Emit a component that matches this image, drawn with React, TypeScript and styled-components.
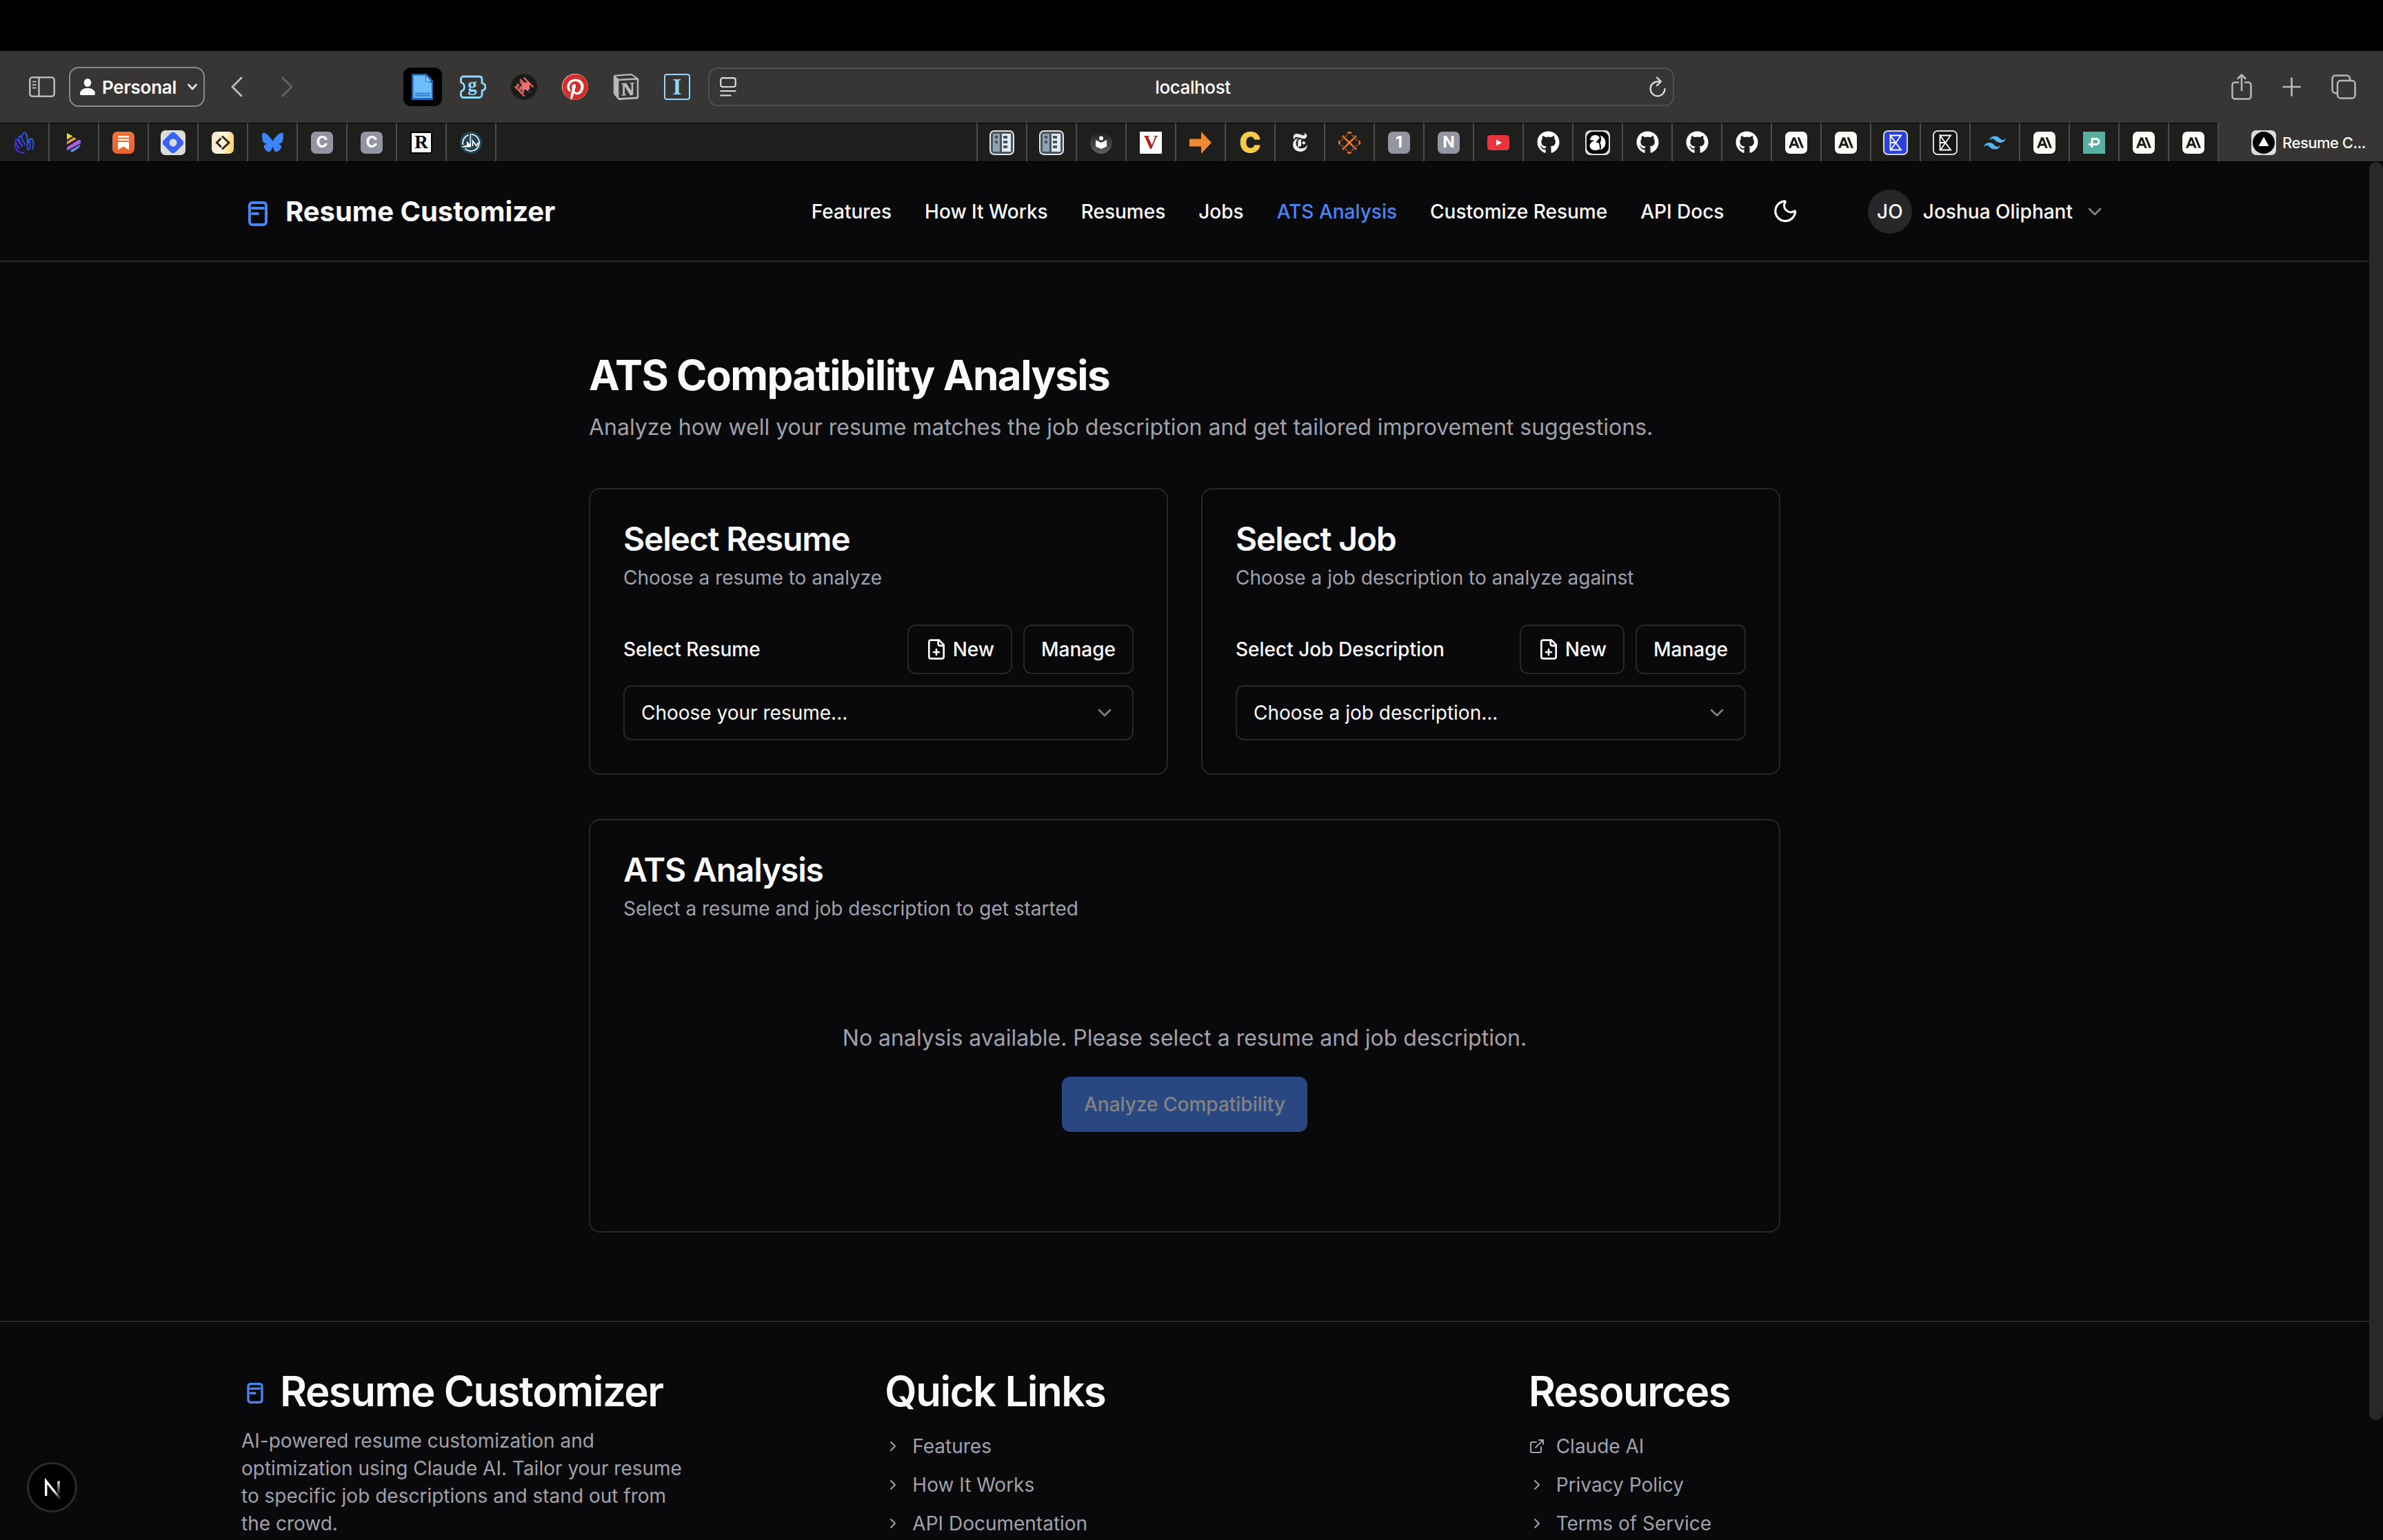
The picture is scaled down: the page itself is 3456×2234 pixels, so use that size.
import React from "react";
import styled, { createGlobalStyle } from "styled-components";
import { ChevronDown, ChevronRight, ExternalLink, Moon } from "lucide-react";
import { FaGithub, FaPinterest } from "react-icons/fa";
import { FaBluesky } from "react-icons/fa6";
import { SiAnthropic, SiNewyorktimes, SiNotion, SiTailwindcss } from "react-icons/si";

const c = {
  bg: "#09090b",
  border: "#27272a",
  fg: "#fafafa",
  muted: "#a1a1aa",
  primary: "#4a85f5",
  chrome: "#383634",
  strip: "#1e1e1c",
  chromeIcon: "#b9b8b7",
};

const GlobalStyle = createGlobalStyle`
  * { box-sizing: border-box; }
  html, body { margin: 0; background: ${c.bg}; overflow: hidden; }
  body {
    font-family: Inter, "Liberation Sans", sans-serif;
    font-optical-sizing: none;
    -webkit-font-smoothing: antialiased;
    color: ${c.fg};
  }
  h1, h2, h3, p, ul { margin: 0; padding: 0; font-weight: inherit; }
  svg { display: block; flex: none; }
`;

/* ---------- browser window ---------- */

const Screen = styled.div`
  width: 3456px;
  height: 2234px;
  display: flex;
  flex-direction: column;
  overflow: hidden;
  background: ${c.bg};
`;

const Notch = styled.div`
  height: 74px;
  flex: none;
  background: #000;
`;

const Toolbar = styled.div`
  height: 104px;
  flex: none;
  display: flex;
  align-items: center;
  padding: 0 39px 0 42px;
  background: ${c.chrome};
  color: ${c.chromeIcon};
`;

const ProfileButton = styled.div`
  width: 197px;
  height: 58px;
  margin: 0 38px 0 20px;
  padding: 0 9px 0 14px;
  display: flex;
  align-items: center;
  border: 2px solid #8b8a88;
  border-radius: 14px;
  color: #fff;
  font-size: 26px;
  font-weight: 600;
  letter-spacing: -0.25px;
  span { margin: 0 auto 0 10px; }
`;

const History = styled.div`
  display: flex;
  gap: 56px;
  margin-right: 160px;
`;

const Extensions = styled.div`
  display: flex;
  align-items: center;
  gap: 36px;
  margin: 0 26px;
`;

const ActiveExtension = styled.div`
  width: 56px;
  height: 56px;
  display: grid;
  place-items: center;
  border-radius: 11px;
  background: #000;
`;

const AddressBar = styled.div`
  width: 1401px;
  height: 56px;
  padding: 0 10px 0 15px;
  display: flex;
  align-items: center;
  justify-content: space-between;
  border: 2px solid #51504e;
  border-radius: 14px;
  color: #dddcdb;
  span {
    color: #fff;
    font-size: 26px;
    font-weight: 500;
    letter-spacing: -0.4px;
  }
`;

const WindowActions = styled.div`
  margin-left: auto;
  display: flex;
  align-items: center;
  gap: 44px;
`;

const TabStrip = styled.div`
  height: 57px;
  flex: none;
  display: flex;
  background: ${c.strip};
  border-bottom: 1px solid #000;
`;

const Tab = styled.div<{ $side: "left" | "right" }>`
  width: 72px;
  display: grid;
  place-items: center;
  border-top: 1px solid #000;
  border-${(p) => p.$side}: 2px solid #4b4b49;
`;

const StripGap = styled.div`
  flex: 1;
  border-top: 1px solid #000;
`;

const ActiveTab = styled.div`
  width: 240px;
  padding: 1px 0 0 47px;
  display: flex;
  align-items: center;
  gap: 9px;
  background: ${c.chrome};
  border-left: 2px solid #4b4b49;
  font-size: 22px;
  font-weight: 500;
  letter-spacing: -0.5px;
`;

const Tile = styled.div<{ $bg: string; $size?: number; $radius?: number; $border?: string; $color?: string }>`
  width: ${(p) => p.$size ?? 32}px;
  height: ${(p) => p.$size ?? 32}px;
  display: grid;
  place-items: center;
  overflow: hidden;
  border-radius: ${(p) => p.$radius ?? 7}px;
  border: ${(p) => (p.$border ? `2px solid ${p.$border}` : "none")};
  background: ${(p) => p.$bg};
  color: ${(p) => p.$color ?? "#fff"};
`;

const Glyph = styled.span<{ $size?: number; $weight?: number; $serif?: boolean; $color?: string }>`
  font-family: ${(p) => (p.$serif ? '"Liberation Serif", serif' : "Inter, sans-serif")};
  font-size: ${(p) => p.$size ?? 23}px;
  font-weight: ${(p) => p.$weight ?? 700};
  line-height: 1;
  color: ${(p) => p.$color ?? "#fff"};
`;

/* ---------- page ---------- */

const Viewport = styled.div`
  flex: 1;
  min-height: 0;
  display: flex;
`;

const Page = styled.div`
  width: 3436px;
  overflow: hidden;
`;

const ScrollThumb = styled.div`
  width: 20px;
  height: 1825px;
  border-radius: 10px;
  background: #28282a;
`;

const Header = styled.header`
  height: 145px;
  padding: 0 382px 0 350px;
  display: flex;
  align-items: center;
  border-bottom: 2px solid ${c.border};
  font-size: 28px;
  font-weight: 500;
  line-height: 40px;
`;

const Brand = styled.div`
  display: flex;
  align-items: center;
  gap: 16px;
  margin-right: auto;
  font-size: 40px;
  font-weight: 700;
  letter-spacing: -0.04px;
  svg { margin-top: 7px; }
`;

const Nav = styled.nav`
  display: flex;
  gap: 48px;
  margin-right: 70px;
`;

const NavLink = styled.a<{ $active?: boolean }>`
  color: ${(p) => (p.$active ? c.primary : c.fg)};
`;

const User = styled.div`
  display: flex;
  align-items: center;
  gap: 16px;
  margin-left: 100px;
  > svg { opacity: 0.5; }
`;

const Avatar = styled.div`
  width: 64px;
  height: 64px;
  display: grid;
  place-items: center;
  border-radius: 50%;
  background: ${c.border};
`;

const Main = styled.main`
  width: 1728px;
  margin: 0 auto;
  padding: 128px 0;
`;

const PageTitle = styled.h1`
  font-size: 60px;
  line-height: 72px;
  font-weight: 700;
  letter-spacing: -0.025em;
`;

const Lead = styled.p`
  margin: 16px 0 64px;
  font-size: 32px;
  line-height: 48px;
  color: ${c.muted};
`;

const CardGrid = styled.div`
  display: grid;
  grid-template-columns: 1fr 1fr;
  gap: 48px;
  margin-bottom: 64px;
`;

const Card = styled.section`
  padding: 48px;
  border: 2px solid ${c.border};
  border-radius: 16px;
`;

const CardTitle = styled.h3`
  font-size: 48px;
  line-height: 48px;
  font-weight: 600;
  letter-spacing: -0.025em;
`;

const CardText = styled.p`
  margin: 12px 0 48px;
  font-size: 28px;
  line-height: 40px;
  color: ${c.muted};
`;

const FieldRow = styled.div`
  display: flex;
  align-items: center;
  gap: 16px;
  margin-bottom: 16px;
  font-size: 28px;
  font-weight: 500;
`;

const FieldLabel = styled.label`
  margin-right: auto;
`;

const OutlineButton = styled.div`
  height: 72px;
  padding: 0 24px;
  display: flex;
  align-items: center;
  gap: 8px;
  border: 2px solid ${c.border};
  border-radius: 12px;
`;

const Select = styled.div`
  height: 80px;
  padding: 0 24px;
  display: flex;
  align-items: center;
  justify-content: space-between;
  border: 2px solid ${c.border};
  border-radius: 12px;
  font-size: 28px;
  svg { opacity: 0.5; }
`;

const Empty = styled.div`
  padding: 96px 0;
  display: flex;
  flex-direction: column;
  align-items: center;
  gap: 32px;
  font-size: 32px;
  line-height: 48px;
  color: ${c.muted};
`;

const PrimaryButton = styled.div`
  height: 80px;
  padding: 0 32px;
  display: flex;
  align-items: center;
  border-radius: 12px;
  background: ${c.primary};
  color: ${c.fg};
  font-size: 28px;
  font-weight: 500;
  opacity: 0.5;
`;

const Footer = styled.footer`
  padding: 64px 350px;
  display: grid;
  grid-template-columns: repeat(3, 1fr);
  gap: 64px;
  border-top: 2px solid ${c.border};
`;

const FooterTitle = styled.h2`
  display: flex;
  align-items: center;
  gap: 16px;
  font-size: 60px;
  line-height: 72px;
  font-weight: 600;
  letter-spacing: -0.025em;
  svg { margin-top: 6px; }
`;

const FooterText = styled.p`
  max-width: 650px;
  margin-top: 16px;
  font-size: 28px;
  line-height: 40px;
  color: ${c.muted};
`;

const FooterList = styled.ul`
  margin-top: 24px;
  display: flex;
  flex-direction: column;
  gap: 16px;
  list-style: none;
  font-size: 28px;
  line-height: 40px;
  color: ${c.muted};
`;

const FooterItem = styled.li`
  display: flex;
  align-items: center;
  gap: 16px;
`;

const DevBadge = styled.div`
  position: absolute;
  left: 39px;
  top: 2121px;
  width: 73px;
  height: 73px;
  display: grid;
  place-items: center;
  border-radius: 50%;
  border: 3px solid #2a2a2b;
  background: #000;
`;

/* ---------- drawings ---------- */

const DocIcon = ({ size }: { size: number }) => (
  <svg width={size} height={size} viewBox="0 0 24 24" fill="none" stroke={c.primary} strokeWidth="2" strokeLinecap="round">
    <rect x="6" y="4" width="12" height="16" rx="2" />
    <path d="M8 8h8M8 12h4" />
  </svg>
);

const FilePlusIcon = () => (
  <svg width="32" height="32" viewBox="0 0 24 24" fill="none" stroke="currentColor" strokeWidth="2" strokeLinecap="round" strokeLinejoin="round">
    <path d="M15 2H6a2 2 0 0 0-2 2v16a2 2 0 0 0 2 2h12a2 2 0 0 0 2-2V7Z" />
    <path d="M14 2v4a2 2 0 0 0 2 2h4M9 15h6M12 12v6" />
  </svg>
);

const SidebarIcon = () => (
  <svg width="38" height="30" viewBox="0 0 38 30" fill="none" stroke="currentColor" strokeWidth="2.6">
    <rect x="1.3" y="1.3" width="35.4" height="27.4" rx="4" />
    <path d="M14.5 1.5v27" />
    <path d="M5.5 7.5h4.500M5.500 12h4.500M5.500 16.500h4.500" strokeWidth="1.8" strokeLinecap="round" />
  </svg>
);

const PersonIcon = () => (
  <svg width="22" height="24" viewBox="0 0 22 24" fill="currentColor">
    <ellipse cx="11" cy="6" rx="5.300" ry="6" />
    <path d="M0 22c0-5 5-8.200 11-8.200S22 17 22 22c0 1.200-.8 2-2 2H2c-1.200 0-2-.8-2-2z" />
  </svg>
);

const SmallChevron = () => (
  <svg width="14" height="10" viewBox="0 0 14 10" fill="none" stroke="#e6e5e4" strokeWidth="2.6" strokeLinecap="round" strokeLinejoin="round">
    <path d="M1.500 2l5.500 6 5.500-6" />
  </svg>
);

const Arrow = ({ flip }: { flip?: boolean }) => (
  <svg width="17" height="30" viewBox="0 0 17 30" fill="none" stroke={flip ? "#646361" : c.chromeIcon} strokeWidth="3" strokeLinecap="round" strokeLinejoin="round">
    <path d={flip ? "M2 2l13 13L2 28" : "M15 2L2 15l13 13"} />
  </svg>
);

const PageFileIcon = () => (
  <svg width="32" height="38" viewBox="0 0 32 38">
    <path d="M0 0h22l9 10v28H0z" fill="#1467b8" />
    <path d="M2.500 2.500h17.500v8.500l9 2v22H2.500z" fill="#6fbcfb" />
    <path d="M21 3l7 8h-7z" fill="#8accff" />
    <path d="M5 27.500h22v5.500H5z" fill="#2f86d6" />
    <path d="M5 30.200h22" stroke="#6fbcfb" strokeWidth="1" />
  </svg>
);

const PuzzleIcon = () => (
  <svg width="38" height="38" viewBox="0 0 38 38" fill="none" stroke="#8fd8ff" strokeWidth="2.800" strokeLinejoin="round">
    <path d="M5 4h23c2.500 0 4 1.500 4 3.500v6c3.500 1 5 3 5 5.500s-1.500 4.500-5 5.500V30c0 2.500-1.500 4.500-4 4.500H5c-2 0-3.500-1.500-3.500-3.500v-5.500c3-.8 5-3.200 5-6.500s-2-5.500-5-6.500V7.500C1.500 5.500 3 4 5 4z" />
    <text x="18" y="24.500" textAnchor="middle" fontFamily="Liberation Serif, serif" fontWeight="700" fontSize="27" fill="#8fd8ff" stroke="none">g</text>
  </svg>
);

const DiamondBadge = () => (
  <svg width="38" height="38" viewBox="0 0 38 38">
    <circle cx="19" cy="19" r="19" fill="#1b1b1b" />
    <path d="M15.500 12.500h9.500l2 2V23H15.500z" fill="#f0706c" />
    <g stroke="#f0706c" strokeWidth="2">
      <path d="M18.500 5.500L32.500 19.500M13.500 8l4.500 4.500M5.800 18.500l13.700 14" />
      <path d="M9 14.500l10 10.500M8 17l11 11.500M22 22l5 4.500M13 11l3 3" strokeDasharray="4 1.600" />
    </g>
  </svg>
);

const ReaderIcon = () => (
  <svg width="24" height="28" viewBox="0 0 24 28" fill="none" stroke="currentColor" strokeWidth="2.200" strokeLinecap="round">
    <rect x="1.200" y="1.200" width="21.500" height="12.800" rx="3" />
    <path d="M1.200 20h21.500M1.200 26.500h14.500" />
  </svg>
);

const ReloadIcon = () => (
  <svg width="24" height="30" viewBox="0 0 24 30" fill="none" stroke="currentColor" strokeWidth="2.300" strokeLinecap="round" strokeLinejoin="round">
    <path d="M15.500 7.300H12A10.500 10.500 0 1 0 22.500 17.800" />
    <path d="M11 1.500l5.800 5.800-5.800 5.800" />
  </svg>
);

const ShareIcon = () => (
  <svg width="30" height="38" viewBox="0 0 30 38" fill="none" stroke="currentColor" strokeWidth="2.500" strokeLinecap="round" strokeLinejoin="round">
    <path d="M10 12.500H5a3.500 3.500 0 0 0-3.500 3.500v17A3.500 3.500 0 0 0 5 36.500h20a3.500 3.500 0 0 0 3.500-3.500V16a3.500 3.500 0 0 0-3.500-3.500h-5" />
    <path d="M15 24V1.800M9.500 7L15 1.500 20.500 7" />
  </svg>
);

const PlusIcon = () => (
  <svg width="27" height="28" viewBox="0 0 27 28" stroke="currentColor" strokeWidth="2.700" strokeLinecap="round">
    <path d="M13.500 1.500v25M1.500 14h24" />
  </svg>
);

const WindowsIcon = () => (
  <svg width="36" height="36" viewBox="0 0 36 36" fill="none" stroke="currentColor" strokeWidth="2.500">
    <rect x="9" y="9" width="25.500" height="25.500" rx="4.500" />
    <path d="M8.500 27H6a4.500 4.500 0 0 1-4.500-4.500V6A4.500 4.500 0 0 1 6 1.500h16.500A4.500 4.500 0 0 1 27 6v2.500" />
  </svg>
);

const HandIcon = () => (
  <svg width="32" height="32" viewBox="0 0 32 32" fill="none" strokeWidth="1.900" strokeLinecap="round">
    <defs>
      <linearGradient id="hand" x1="0" y1="1" x2="1" y2="0">
        <stop offset="0" stopColor="#4a1ff5" />
        <stop offset="1" stopColor="#1b73e8" />
      </linearGradient>
    </defs>
    <path
      stroke="url(#hand)"
      d="M16 30.500C9 32 3 26 2.500 19c.8-2 3-1 4 2l2 3.500M8.500 24C4 18 2.500 13 4.500 11.500c2-1 4 3 8.500 10M13 20.500C8 12 6.500 8 9 6.500c2.500-1 4.500 5 8.500 12.500M12.500 8C13 3.500 15 1 17.500 1.500c3 1.500 3 9 3.500 17M21 18.500c.5-5 2.500-8 5-8 5 .5 3.500 10 2 15M23 13c-3 5-3.500 12.500-1 13 3-.5 3-7 2.500-12"
    />
  </svg>
);

const StripesIcon = () => (
  <svg width="32" height="32" viewBox="0 0 32 32">
    <path d="M6 2l8.500 4.500L6 11.500z" fill="#f2d54e" />
    <path d="M6 14.500L16 8l4 2.500L6 18.500z" fill="#e8964f" />
    <path d="M6 22.500L23.500 11.500l3 1.800-1 4L6 27.500z" fill="#a95fdc" />
    <path d="M11 27l15-8.500-2 4.500-11 7.500z" fill="#5b8def" />
  </svg>
);

const BookmarkTile = () => (
  <Tile $bg="linear-gradient(#f0743a, #e8622f)">
    <svg width="32" height="32" viewBox="0 0 32 32" fill="#fff">
      <path d="M8 6h16v2.500H8zM8 10.500h16V13H8zM8 15h16v11.500l-8-5-8 5z" />
    </svg>
  </Tile>
);

const RhombusTile = () => (
  <Tile $bg="#dcdcdc" $size={36}>
    <svg width="36" height="36" viewBox="0 0 36 36">
      <rect x="5.800" y="5.800" width="24.400" height="24.400" rx="5" transform="rotate(45 18 18)" fill="#3963f6" />
      <circle cx="18" cy="18" r="5.500" fill="#dcdcdc" />
    </svg>
  </Tile>
);

const CodeTile = () => (
  <Tile $bg="linear-gradient(100deg, #f9e6cf 10%, #fdf6e4 50%, #f5cf57)">
    <svg width="32" height="32" viewBox="0 0 32 32" fill="none" stroke="#3a2410" strokeWidth="3">
      <path d="M15 6.500l10 9.500-10 9.500" />
      <path d="M13.500 9.500L7.500 16l6.500 6.500" />
    </svg>
  </Tile>
);

const CompassIcon = () => (
  <svg width="32" height="32" viewBox="0 0 32 32" fill="none" stroke="#fff" strokeWidth="1.700">
    <circle cx="16" cy="16" r="16" fill="#23485c" stroke="none" />
    <path d="M16.500 4A12 12 0 1 1 7.500 24.500M4.500 19A12 12 0 0 1 12.500 4.800" />
    <path d="M15.500 3v19H3l7.500-2v-5.500l4.500 5V6z" fill="#fff" strokeWidth="1" />
    <path d="M18.500 21v-7.500l5.500 7 2.500-4.500" />
  </svg>
);

const NewsTile = () => (
  <Tile $bg="#47545f" $size={36} $border="#e0e2e3">
    <svg width="32" height="32" viewBox="0 0 32 32">
      <rect x="3" y="3" width="10" height="26" fill="#8fa1b0" />
      <rect x="16" y="3" width="13" height="26" fill="#e4e9ed" />
      <path d="M6 6h4v4H6zM6 13h4v4H6zM18 6h6v4h-6zM18 13h6v4h-6zM18 20h6v4h-6z" fill="#47545f" />
    </svg>
  </Tile>
);

const LibraryTile = () => (
  <Tile $bg="linear-gradient(#1c1c1c, #606060)" $radius={16}>
    <svg width="32" height="32" viewBox="0 0 32 32" fill="#fff">
      <circle cx="16" cy="9.500" r="3" />
      <path d="M8 12l8 4 8-4v9.500L16 25l-8-3.500z" />
    </svg>
  </Tile>
);

const OrangeArrow = () => (
  <svg width="32" height="32" viewBox="0 0 32 32" fill="#f08a30">
    <path d="M0 10.500h17V0l15 16-15 16V21.500H0z" />
  </svg>
);

const LatticeIcon = () => (
  <svg width="32" height="32" viewBox="0 0 32 32" fill="none" stroke="#ec7428" strokeWidth="1.500">
    <path d="M5 7.500h3l8 7.500 8-7.500h3M5 24.500h3l8-7.500 8 7.500h3M7.500 5v3l7.500 8-7.500 8v3M24.500 5v3L17 16l7.500 8v3" />
    <path d="M13.500 2.500L16 0l2.500 2.500M13.500 29.500L16 32l2.500-2.500M2.500 13.500L0 16l2.500 2.500M29.500 13.500L32 16l-2.500 2.500" strokeWidth="2.500" />
    <path d="M10.500 7l2.500-3M21.500 7L19 4M10.500 25l2.500 3M21.500 25L19 28M7 10.500L4 13M25 10.500l3 2.500M7 21.500L4 19M25 21.500l3-2.500" strokeDasharray="2 1" />
  </svg>
);

const YoutubeIcon = () => (
  <svg width="32" height="22" viewBox="0 0 32 22">
    <rect width="32" height="22" rx="4.500" fill="#ea333d" />
    <path d="M13 6.500l8 4.500-8 4.500z" fill="#fff" />
  </svg>
);

const ScholarTile = () => (
  <Tile $bg="#dcdcdc" $size={36}>
    <svg width="36" height="36" viewBox="0 0 36 36">
      <rect x="2" y="2" width="32" height="32" rx="9" fill="#000" />
      <g fill="#fff">
        <path d="M7 14C7.500 9.500 10.500 7 14.500 7c3 0 5.500 1.500 6.500 4l-6 7c4-1 6 1 5.500 4l1 5c-2 1.500-4.500 2-7 2-5 0-8-3-8-6.500s3-6 7.500-7.500z" />
        <path d="M22 7.500c4.500 1.500 7.500 6 7.500 10.500s-3 9-7.500 10.500c1.500-3.500 1.500-7-.5-10 2-3.500 2-7.500.5-11z" />
      </g>
    </svg>
  </Tile>
);

const HourglassTile = ({ bg }: { bg: string }) => (
  <Tile $bg={bg} $size={36} $border="#d8d9dc">
    <svg width="32" height="32" viewBox="0 0 32 32" fill="none" stroke="#fff" strokeWidth="1.800">
      <path d="M8.500 5.500h15.500L9 26.500h15L8.500 5.500v21h3M8.500 16h7" />
    </svg>
  </Tile>
);

const AnthropicTile = () => (
  <Tile $bg="#fbfaf7" $color="#1c1b19">
    <SiAnthropic size={22} />
  </Tile>
);

const LetterTile = ({ children }: { children: string }) => (
  <Tile $bg="#9495a2">
    <Glyph>{children}</Glyph>
  </Tile>
);

const SerifTile = () => (
  <Tile $bg="#f7fafc" $radius={0} $border="#000">
    <Glyph $serif $size={27} $color="#000">R</Glyph>
  </Tile>
);

const ParkingTile = () => (
  <Tile $bg="#57b0a0" $radius={0}>
    <svg width="32" height="32" viewBox="0 0 32 32" fill="none" stroke="#fff" strokeWidth="2.800">
      <path d="M13 23V10.500h6a4 4 0 0 1 0 8H8" />
    </svg>
  </Tile>
);

const TriangleTile = () => (
  <Tile $bg="#dcdcdc" $size={36}>
    <svg width="36" height="36" viewBox="0 0 36 36">
      <circle cx="18" cy="18" r="16" fill="#000" />
      <path d="M18 9.500l7.500 13.500h-15z" fill="#fff" />
    </svg>
  </Tile>
);

const pinned: React.ReactNode[] = [
  <HandIcon />,
  <StripesIcon />,
  <BookmarkTile />,
  <RhombusTile />,
  <CodeTile />,
  <FaBluesky size={31} color="#3c85f7" />,
  <LetterTile>C</LetterTile>,
  <LetterTile>C</LetterTile>,
  <SerifTile />,
  <CompassIcon />,
];

const open: React.ReactNode[] = [
  <NewsTile />,
  <NewsTile />,
  <LibraryTile />,
  <Tile $bg="#fff" $radius={0}><Glyph $serif $size={29} $color="#b82020">V</Glyph></Tile>,
  <OrangeArrow />,
  <Glyph $size={42} $weight={900} $color="#f5cb4b">C</Glyph>,
  <SiNewyorktimes size={27} color="#eee" />,
  <LatticeIcon />,
  <LetterTile>1</LetterTile>,
  <LetterTile>N</LetterTile>,
  <YoutubeIcon />,
  <FaGithub size={33} color="#fff" />,
  <ScholarTile />,
  <FaGithub size={33} color="#fff" />,
  <FaGithub size={33} color="#fff" />,
  <FaGithub size={33} color="#fff" />,
  <AnthropicTile />,
  <AnthropicTile />,
  <HourglassTile bg="#2a41e0" />,
  <HourglassTile bg="#141414" />,
  <SiTailwindcss size={32} color="#57b5f5" />,
  <AnthropicTile />,
  <ParkingTile />,
  <AnthropicTile />,
  <AnthropicTile />,
];

const navLinks = ["Features", "How It Works", "Resumes", "Jobs", "ATS Analysis", "Customize Resume", "API Docs"];

const BrowserChrome = () => (
  <>
    <Notch />
    <Toolbar>
      <SidebarIcon />
      <ProfileButton>
        <PersonIcon />
        <span>Personal</span>
        <SmallChevron />
      </ProfileButton>
      <History>
        <Arrow />
        <Arrow flip />
      </History>
      <ActiveExtension>
        <PageFileIcon />
      </ActiveExtension>
      <Extensions>
        <PuzzleIcon />
        <DiamondBadge />
        <Tile $bg="#fff" $size={38} $radius={19} $color="#d32f2c">
          <FaPinterest size={39} />
        </Tile>
        <SiNotion size={38} />
        <Tile $bg="transparent" $size={38} $radius={4} $border="#8fd8ff">
          <Glyph $serif $size={33} $weight={700} $color="#8fd8ff">I</Glyph>
        </Tile>
      </Extensions>
      <AddressBar>
        <ReaderIcon />
        <span>localhost</span>
        <ReloadIcon />
      </AddressBar>
      <WindowActions>
        <ShareIcon />
        <PlusIcon />
        <WindowsIcon />
      </WindowActions>
    </Toolbar>
    <TabStrip>
      {pinned.map((icon, i) => (
        <Tab key={i} $side="right">{icon}</Tab>
      ))}
      <StripGap />
      {open.map((icon, i) => (
        <Tab key={i} $side="left">{icon}</Tab>
      ))}
      <ActiveTab>
        <TriangleTile />
        <span>Resume C...</span>
      </ActiveTab>
    </TabStrip>
  </>
);

const Picker = ({ title, text, label, placeholder }: { title: string; text: string; label: string; placeholder: string }) => (
  <Card>
    <CardTitle>{title}</CardTitle>
    <CardText>{text}</CardText>
    <FieldRow>
      <FieldLabel>{label}</FieldLabel>
      <OutlineButton>
        <FilePlusIcon />
        New
      </OutlineButton>
      <OutlineButton>Manage</OutlineButton>
    </FieldRow>
    <Select>
      {placeholder}
      <ChevronDown size={32} />
    </Select>
  </Card>
);

const NextBadge = () => (
  <DevBadge>
    <svg width="66" height="66" viewBox="0 0 66 66" fill="none" strokeWidth="3.400">
      <defs>
        <linearGradient id="diag" gradientUnits="userSpaceOnUse" x1="36" y1="36" x2="46" y2="50">
          <stop offset="0" stopColor="#fff" />
          <stop offset="1" stopColor="#fff" stopOpacity="0" />
        </linearGradient>
        <linearGradient id="stem" gradientUnits="userSpaceOnUse" x1="42" y1="22" x2="42" y2="44">
          <stop offset="0" stopColor="#fff" />
          <stop offset="1" stopColor="#fff" stopOpacity="0" />
        </linearGradient>
      </defs>
      <path d="M45 50L23.700 23.500V45" stroke="url(#diag)" />
      <path d="M42 23.500V44" stroke="url(#stem)" />
    </svg>
  </DevBadge>
);

export default function App() {
  return (
    <Screen>
      <GlobalStyle />
      <BrowserChrome />
      <Viewport>
        <Page>
          <Header>
            <Brand>
              <DocIcon size={48} />
              Resume Customizer
            </Brand>
            <Nav>
              {navLinks.map((l) => (
                <NavLink key={l} $active={l === "ATS Analysis"}>{l}</NavLink>
              ))}
            </Nav>
            <Moon size={38.4} />
            <User>
              <Avatar>JO</Avatar>
              Joshua Oliphant
              <ChevronDown size={32} />
            </User>
          </Header>
          <Main>
            <PageTitle>ATS Compatibility Analysis</PageTitle>
            <Lead>Analyze how well your resume matches the job description and get tailored improvement suggestions.</Lead>
            <CardGrid>
              <Picker title="Select Resume" text="Choose a resume to analyze" label="Select Resume" placeholder="Choose your resume..." />
              <Picker title="Select Job" text="Choose a job description to analyze against" label="Select Job Description" placeholder="Choose a job description..." />
            </CardGrid>
            <Card>
              <CardTitle>ATS Analysis</CardTitle>
              <CardText>Select a resume and job description to get started</CardText>
              <Empty>
                <p>No analysis available. Please select a resume and job description.</p>
                <PrimaryButton>Analyze Compatibility</PrimaryButton>
              </Empty>
            </Card>
          </Main>
          <Footer>
            <div>
              <FooterTitle>
                <DocIcon size={40} />
                Resume Customizer
              </FooterTitle>
              <FooterText>
                AI-powered resume customization and optimization using Claude AI. Tailor your resume to specific job
                descriptions and stand out from the crowd.
              </FooterText>
            </div>
            <div>
              <FooterTitle>Quick Links</FooterTitle>
              <FooterList>
                {["Features", "How It Works", "API Documentation"].map((l) => (
                  <FooterItem key={l}>
                    <ChevronRight size={24} />
                    {l}
                  </FooterItem>
                ))}
              </FooterList>
            </div>
            <div>
              <FooterTitle>Resources</FooterTitle>
              <FooterList>
                <FooterItem>
                  <ExternalLink size={24} />
                  Claude AI
                </FooterItem>
                {["Privacy Policy", "Terms of Service"].map((l) => (
                  <FooterItem key={l}>
                    <ChevronRight size={24} />
                    {l}
                  </FooterItem>
                ))}
              </FooterList>
            </div>
          </Footer>
        </Page>
        <ScrollThumb />
      </Viewport>
      <NextBadge />
    </Screen>
  );
}
